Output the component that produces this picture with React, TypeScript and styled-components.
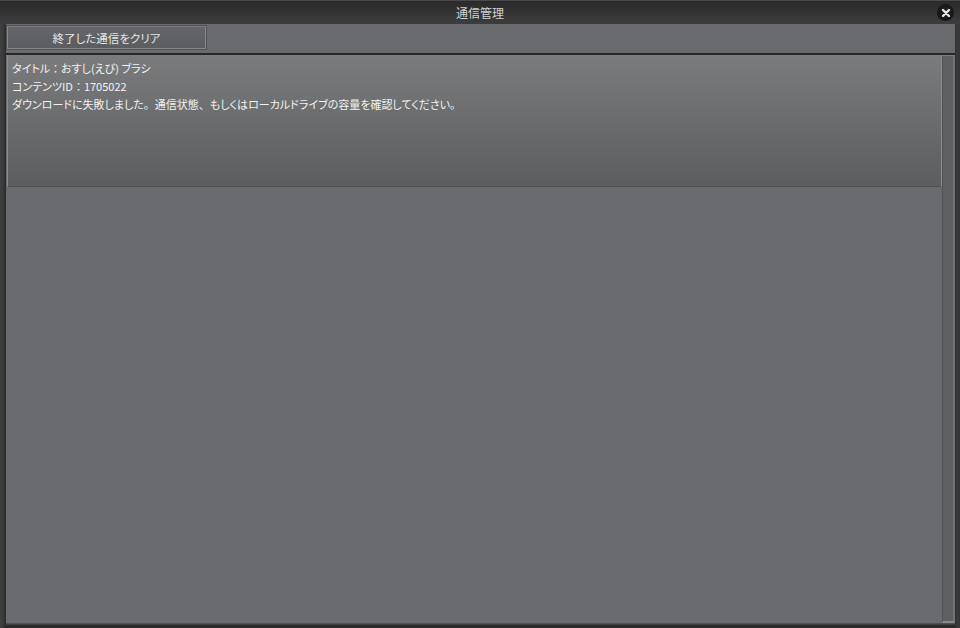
import React from "react";
import styled, { createGlobalStyle } from "styled-components";

const Global = createGlobalStyle`
  html, body { margin: 0; padding: 0; background: #2b2b2b; overflow: hidden; }
  body { font-family: "Noto Sans CJK JP", "Noto Sans", sans-serif; }
`;

const Window = styled.div`
  width: 960px;
  height: 628px;
  display: flex;
  flex-direction: column;
  background: #3a3a3a;
`;

const TitleBar = styled.div`
  position: relative;
  height: 24px;
  flex: none;
  display: flex;
  align-items: center;
  justify-content: center;
  background: linear-gradient(#2a2a2a, #3d3d3d);
  border-top: 1px solid #4a4a4a;
  box-sizing: border-box;
`;

const Title = styled.span`
  color: #d2d2d2;
  font-size: 12px;
`;

const CloseButton = styled.div`
  position: absolute;
  right: 6px;
  top: 3px;
  width: 17px;
  height: 17px;
  border-radius: 50%;
  background: radial-gradient(circle at 50% 40%, #222, #0e0e0e);
  display: flex;
  align-items: center;
  justify-content: center;
`;

const Body = styled.div`
  flex: 1;
  display: flex;
  min-height: 0;
`;

const SideFrame = styled.div<{ $side: "left" | "right" }>`
  width: ${(p) => (p.$side === "left" ? "6px" : "5px")};
  flex: none;
  background: ${(p) =>
    p.$side === "left"
      ? "linear-gradient(90deg, #404040 0, #383838 4px, #2c2c2c 5px, #2c2c2c 6px)"
      : "linear-gradient(90deg, #2e2e2e 0, #3a3a3a 2px, #353535 5px)"};
`;

const Main = styled.div`
  flex: 1;
  display: flex;
  flex-direction: column;
  min-width: 0;
`;

const Toolbar = styled.div`
  height: 31px;
  flex: none;
  background: #6a6b6f;
  padding: 2px 0 0 0;
  box-sizing: border-box;
  border-bottom: 2px solid #262626;
`;

const ClearButton = styled.button`
  width: 199px;
  height: 23px;
  box-sizing: border-box;
  border: 1px solid #87888b;
  border-top-color: #7a7b7e;
  background: linear-gradient(#646568, #5c5d60);
  color: #e6e6e6;
  font-family: "Noto Sans CJK JP", "Noto Sans", sans-serif;
  font-size: 11.5px;
  font-feature-settings: "palt";
  padding: 0;
  margin: 0 0 0 1px;
  box-shadow: 0 0 0 1px #505154;
  display: block;
`;

const ListArea = styled.div`
  flex: 1;
  display: flex;
  min-height: 0;
  background: #6a6b6f;
  border-top: 1px solid #7e7f82;
`;

const List = styled.div`
  flex: 1;
  padding: 0 0 0 1px;
  min-width: 0;
`;

const Item = styled.div`
  height: 131px;
  box-sizing: border-box;
  padding: 3px 4px;
  background: linear-gradient(#7a7b7d, #5c5d5f);
  border-left: 1px solid #8d8e90;
  border-right: 1px solid #8d8e90;
  border-bottom: 1px solid #505153;
  color: #f2f2f2;
  font-size: 11px;
  line-height: 18px;
  font-feature-settings: "palt";
`;

const Line = styled.div`
  white-space: nowrap;
`;

const Punct = styled.span`
  font-feature-settings: normal;
`;

const Scrollbar = styled.div`
  width: 13px;
  flex: none;
  box-sizing: border-box;
  background: #5f6063;
  border-left: 1px solid #505154;
  border-right: 2px solid #727376;
  border-bottom: 2px solid #8a8b8e;
`;

const BottomFrame = styled.div`
  height: 5px;
  flex: none;
  background: linear-gradient(#505153 0, #505153 1px, #2e2e2e 2px, #2a2a2a 5px);
`;

export default function App() {
  return (
    <>
      <Global />
      <Window>
        <TitleBar>
          <Title>通信管理</Title>
          <CloseButton>
            <svg width="10" height="10" viewBox="0 0 10 10">
              <path d="M2 2 L8 8 M8 2 L2 8" stroke="#e8e8e8" strokeWidth="2.4" strokeLinecap="round" />
            </svg>
          </CloseButton>
        </TitleBar>
        <Body>
          <SideFrame $side="left" />
          <Main>
            <Toolbar>
              <ClearButton>終了した通信をクリア</ClearButton>
            </Toolbar>
            <ListArea>
              <List>
                <Item>
                  <Line>
                    タイトル<Punct>：</Punct>おすし(えび) ブラシ
                  </Line>
                  <Line>
                    コンテンツID<Punct>：</Punct>1705022
                  </Line>
                  <Line>
                    ダウンロードに失敗しました<Punct>。</Punct>通信状態<Punct>、</Punct>もしくはローカルドライブの容量を確認してください<Punct>。</Punct>
                  </Line>
                </Item>
              </List>
              <Scrollbar />
            </ListArea>
            <BottomFrame />
          </Main>
          <SideFrame $side="right" />
        </Body>
      </Window>
    </>
  );
}
